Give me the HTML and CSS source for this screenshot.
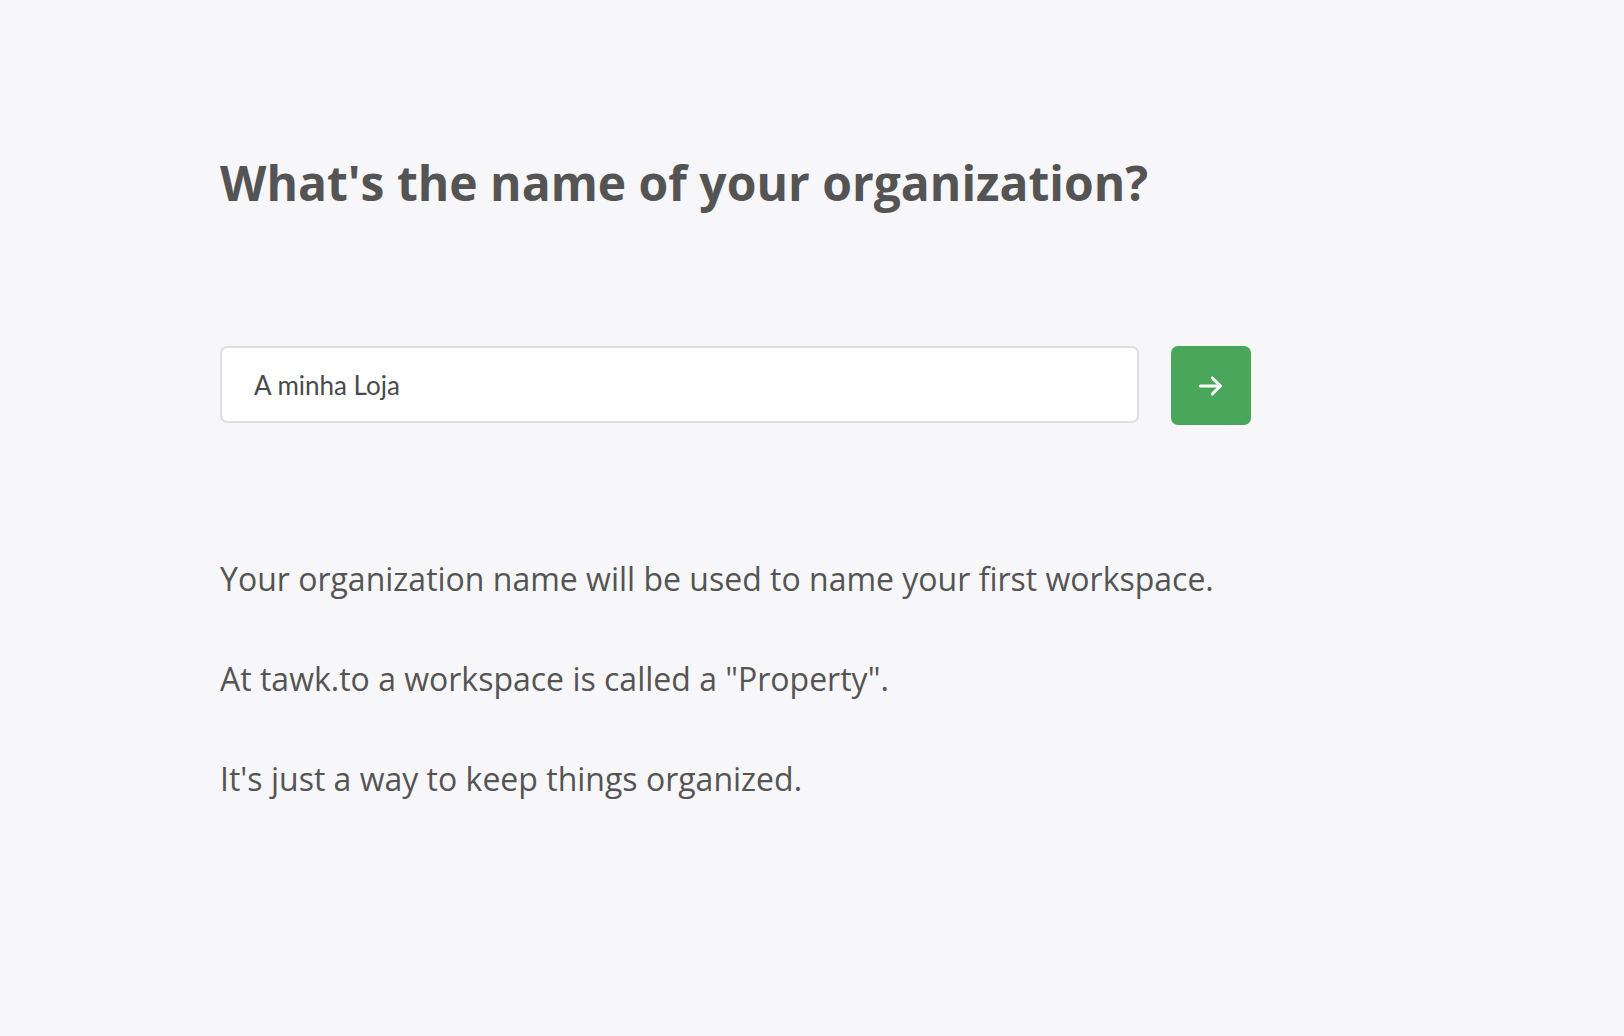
FILE: index.html
```html
<!DOCTYPE html>
<html lang="en">
<head>
  <meta charset="UTF-8">
  <meta name="viewport" content="width=device-width, initial-scale=1.0">
  <title>Create organization</title>
  <link rel="stylesheet" href="styles.css">
</head>
<body>
  <div class="container">
    <h1 class="heading">What's the name of your organization?</h1>

    <form class="org-form">
      <input class="org-input" type="text" value="A minha Loja">
      <button class="next-button" type="button">
        <svg width="32" height="32" viewBox="0 0 24 24" fill="none" stroke="#fff" stroke-width="2.3" stroke-linecap="round" stroke-linejoin="round">
          <line x1="4" y1="12" x2="19" y2="12"></line>
          <polyline points="13 6 19 12 13 18"></polyline>
        </svg>
      </button>
    </form>

    <div class="info">
      <p>Your organization name will be used to name your first workspace.</p>
      <p>At tawk.to a workspace is called a "Property".</p>
      <p>It's just a way to keep things organized.</p>
    </div>
  </div>
</body>
</html>
```

FILE: styles.css
```css
body {
  margin: 0;
  padding: 0;
  font-family: "Open Sans", Arial, sans-serif;
  background: #f7f7f9;
  color: #545454;
  min-height: 100vh;
}

.container {
  padding: 150px 0 0 220px;
}

.heading {
  margin: 0;
  font-size: 48px;
  font-weight: 700;
  line-height: 66px;
  color: #545454;
}

.org-form {
  display: flex;
  align-items: flex-start;
  gap: 32px;
  margin-top: 130px;
}

.org-input {
  width: 919px;
  height: 77px;
  box-sizing: border-box;
  padding: 0 32px;
  border: 2px solid #dddde2;
  border-radius: 7px;
  background: #fff;
  font-family: Lato, "Open Sans", sans-serif;
  font-size: 26px;
  color: #4a4a4a;
  outline: none;
}

.next-button {
  width: 80px;
  height: 79px;
  border: none;
  border-radius: 7px;
  background: #4aa65a;
  display: flex;
  align-items: center;
  justify-content: center;
  cursor: pointer;
  padding: 0;
}

.info {
  margin-top: 131px;
}

.info p {
  margin: 0 0 55px;
  font-size: 32px;
  line-height: 45px;
  color: #545454;
}
```
